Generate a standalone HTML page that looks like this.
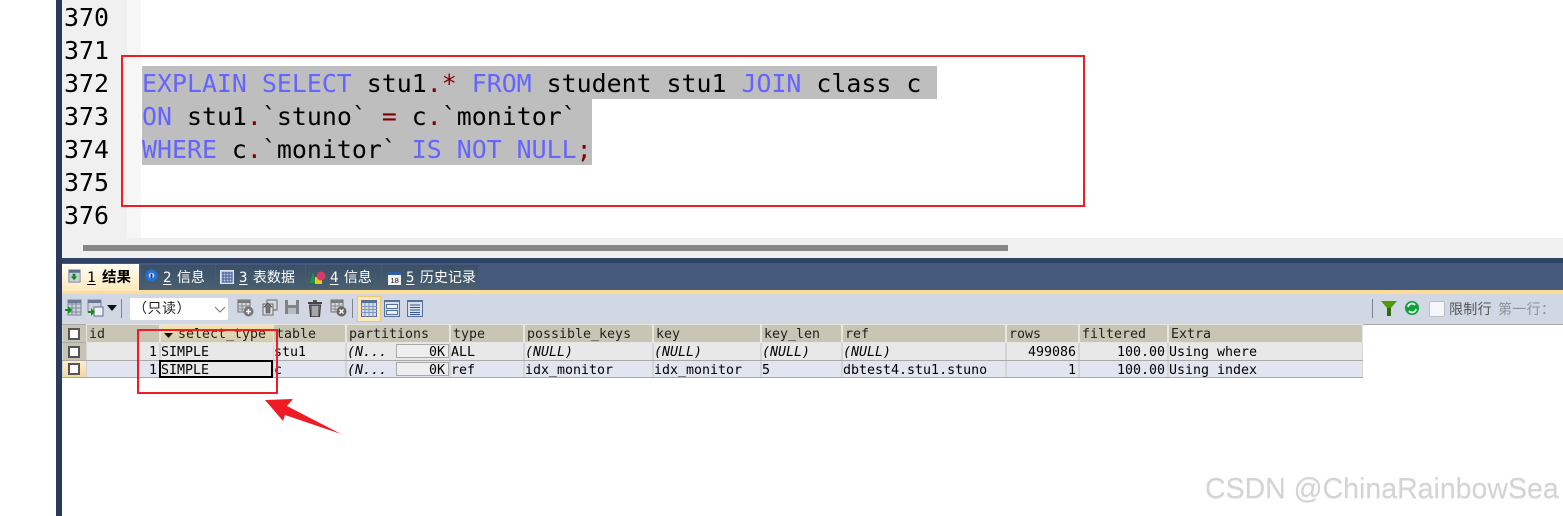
<!DOCTYPE html>
<html><head><meta charset="utf-8">
<style>
html,body{margin:0;padding:0;background:#fff}
#p{position:relative;width:1563px;height:516px;overflow:hidden;background:#fff}
#p div,#p svg{position:absolute}
.m{font-family:"DejaVu Sans Mono","Liberation Mono",monospace;white-space:pre}
.ln{left:64px;font-size:24.9px;line-height:33px;height:33px;color:#000}
.cd{left:142px;font-size:24.9px;line-height:33px;height:33px;color:#000}
.k{color:#6464ff}.o{color:#800000}
.sel{background:#bebebe;left:142px;height:33px}
.c{font-size:13.3px;line-height:18px;height:18px;color:#000;overflow:hidden;box-sizing:border-box}
.h{top:325px;height:17px;background:#c8c5b4;line-height:20px;padding-left:2px;outline:1px solid #e6e6e0;color:#222}
.r1{top:343px;height:17px;background:#e8e8e8;line-height:20px;padding-left:0}
.r2{top:361px;height:16px;background:#e1e5ef;line-height:20px;padding-left:0}
.rt{text-align:right;padding:0 2px 0 0}
.tab{top:265px;height:25px;background:linear-gradient(#3b5068,#4a6070)}
.tt{font-family:"DejaVu Sans Mono","Noto Sans CJK SC",sans-serif;font-size:14px;line-height:26px;height:26px;color:#fff;white-space:pre;word-spacing:-3px}
.tt u{text-underline-offset:2px}
.ct{font-family:"Liberation Sans","Noto Sans CJK SC",sans-serif;font-size:14px;line-height:26px;height:26px;white-space:pre}
.cb{width:8px;height:8px;background:#fff;border:2px solid #555;box-sizing:content-box}
</style></head><body><div id="p">

<div style="left:56px;top:0;width:6px;height:516px;background:#2b3a5a"></div>
<div style="left:62px;top:0;width:65px;height:238px;background:#f0f0f0"></div>
<div style="left:127px;top:0;width:14px;height:238px;background:#f6f6f6"></div>

<div class="m ln" style="top:1px">370</div>
<div class="m ln" style="top:34px">371</div>
<div class="m ln" style="top:67px">372</div>
<div class="m ln" style="top:100px">373</div>
<div class="m ln" style="top:133px">374</div>
<div class="m ln" style="top:166px">375</div>
<div class="m ln" style="top:199px">376</div>

<div class="sel" style="top:66px;width:795px"></div>
<div class="sel" style="top:99px;width:450px"></div>
<div class="sel" style="top:132px;width:450px"></div>

<div class="m cd" style="top:67px"><span class="k">EXPLAIN SELECT</span> stu1<span class="o">.*</span> <span class="k">FROM</span> student stu1 <span class="k">JOIN</span> class c</div>
<div class="m cd" style="top:100px"><span class="k">ON</span> stu1<span class="o">.</span>`stuno` <span class="o">=</span> c<span class="o">.</span>`monitor`</div>
<div class="m cd" style="top:133px"><span class="k">WHERE</span> c<span class="o">.</span>`monitor` <span class="k">IS NOT NULL</span><span class="o">;</span></div>

<div style="left:62px;top:238px;width:1501px;height:20px;background:#f0f0f0"></div>
<div style="left:83px;top:245px;width:925px;height:6px;background:#868686"></div>

<div style="left:62px;top:258px;width:1501px;height:5px;background:#2f4367"></div>
<div style="left:62px;top:263px;width:1501px;height:27px;background:#44597b"></div>
<div style="left:62px;top:290px;width:1501px;height:4px;background:#fddd96"></div>
<div style="left:62px;top:294px;width:1501px;height:30px;background:#d1d8e3"></div>

<div style="left:62px;top:264px;width:77px;height:27px;background:linear-gradient(#fffdf4,#fde9bb)"></div>
<div class="tab" style="left:141px;width:74px"></div>
<div class="tab" style="left:216px;width:89px"></div>
<div class="tab" style="left:306px;width:75px"></div>
<div class="tab" style="left:382px;width:96px"></div>

<svg style="left:67px;top:269px" width="15" height="15" viewBox="0 0 16 16"><rect x="2" y="1" width="12" height="13" fill="#c6cfdd" stroke="#7a8699"/><rect x="2" y="1" width="12" height="3" fill="#5a6f8f"/><path d="M6 5h3v3h2l-3.500 4L4 8h2z" fill="#1a8a1a"/></svg>
<div class="tt" style="left:87px;top:265px;color:#000;font-weight:bold;font-size:14.500px;word-spacing:-2.500px"><u style="font-weight:normal">1</u> 结果</div>

<svg style="left:145px;top:269px" width="13" height="13" viewBox="0 0 14 14"><circle cx="7" cy="7" r="6.500" fill="#2a6fd0"/><circle cx="7" cy="7" r="3" fill="#cfe0f5"/><rect x="6" y="5" width="2" height="5" fill="#123a80"/></svg>
<div class="tt" style="left:163px;top:265px"><u>2</u> 信息</div>

<svg style="left:220px;top:270px" width="14" height="14" viewBox="0 0 14 14"><rect x=".5" y=".5" width="13" height="13" fill="#bcc8e0" stroke="#dfe6f2"/><path d="M2 3h10M2 6h10M2 9h10M2 12h10M3 2v10M6 2v10M9 2v10M12 2v10" stroke="#3f5a90" stroke-width="1"/></svg>
<div class="tt" style="left:239px;top:265px"><u>3</u> 表数据</div>

<svg style="left:310px;top:271px" width="16" height="13" viewBox="0 0 16 13"><path d="M3 1l3 11H0z" fill="#1a9a3a"/><rect x="5" y="6" width="7" height="7" fill="#f5c518"/><circle cx="11" cy="5" r="4.500" fill="#d8386a"/></svg>
<div class="tt" style="left:330px;top:265px"><u>4</u> 信息</div>

<svg style="left:388px;top:271px" width="13" height="14" viewBox="0 0 13 14"><rect x="0" y="2" width="13" height="12" fill="#f2f2f2"/><rect x="0" y="1" width="13" height="3" fill="#2b5fa8"/><text x="2.500" y="12" font-family="Liberation Sans,sans-serif" font-size="7.500" fill="#111">18</text></svg>
<div class="tt" style="left:406px;top:265px"><u>5</u> 历史记录</div>

<svg style="left:65px;top:299px" width="17" height="18" viewBox="0 0 17 18"><rect x="3" y="1" width="13" height="15" fill="#cdd3de" stroke="#7d8798"/><path d="M3 5h13M3 9h13M3 13h13M7 1v15M11 1v15" stroke="#7d8798"/><rect x="3" y="1" width="13" height="3" fill="#6a7a94"/><path d="M0 10h3V7l4 4-4 4v-3H0z" fill="#1a8a1a"/></svg>
<svg style="left:87px;top:299px" width="17" height="18" viewBox="0 0 17 18"><rect x="1" y="1" width="13" height="12" fill="#cdd3de" stroke="#7d8798"/><rect x="1" y="1" width="13" height="3" fill="#6a7a94"/><rect x="7" y="8" width="9" height="9" fill="#eef1f6" stroke="#5a6f8f"/><path d="M1 12h3V9l4 4-4 4v-3H1z" fill="#1a8a1a"/></svg>
<svg style="left:107px;top:305px" width="10" height="6" viewBox="0 0 10 6"><path d="M0 0h10L5 6z" fill="#111"/></svg>
<div style="left:121px;top:299px;width:1px;height:19px;background:#7c8490"></div>

<div style="left:130px;top:298px;width:98px;height:22px;background:#fff;border-radius:2px"></div>
<div class="ct" style="left:133px;top:295px;color:#222;letter-spacing:.5px">（只读）</div>
<svg style="left:214px;top:306px" width="12" height="7" viewBox="0 0 12 7"><path d="M1 1l5 5 5-5" fill="none" stroke="#777"/></svg>

<svg style="left:237px;top:299px" width="17" height="18" viewBox="0 0 17 18"><rect x="1" y="1" width="12" height="12" fill="#d5d8de" stroke="#6e6e6e"/><rect x="1" y="1" width="12" height="3" fill="#777"/><path d="M1 7h12M1 10h12M5 1v12M9 1v12" stroke="#888"/><circle cx="11.500" cy="12.500" r="5" fill="#777"/><path d="M9 12.500h5M11.500 10v5" stroke="#fff" stroke-width="1.500"/></svg>
<svg style="left:261px;top:299px" width="17" height="17" viewBox="0 0 17 17"><rect x="6" y="1" width="10" height="10" fill="#d5d8de" stroke="#666"/><rect x="2" y="5" width="10" height="11" fill="#dfe2e8" stroke="#666"/><path d="M7 4L3 8h2v6h4V8h2z" fill="#777" stroke="#444" stroke-width=".6"/></svg>
<svg style="left:284px;top:299px" width="16" height="16" viewBox="0 0 16 16"><path d="M1 1h14v14H1z" fill="#808387"/><rect x="4" y="1" width="8" height="5" fill="#d8dade"/><rect x="4" y="9" width="8" height="6" fill="#b9bcc1"/></svg>
<svg style="left:307px;top:300px" width="16" height="17" viewBox="0 0 16 17"><rect x="1" y="2" width="14" height="2" fill="#444"/><rect x="6" y="0" width="4" height="2" fill="#555"/><path d="M2.500 5h11l-1 12h-9z" fill="#6f6f6f" stroke="#333"/><path d="M6 6v10M8 6v10M10 6v10" stroke="#ddd"/></svg>
<svg style="left:330px;top:299px" width="17" height="18" viewBox="0 0 17 18"><rect x="1" y="1" width="12" height="12" fill="#d5d8de" stroke="#6e6e6e"/><rect x="1" y="1" width="12" height="3" fill="#777"/><path d="M1 7h12M1 10h12M5 1v12M9 1v12" stroke="#888"/><circle cx="11.500" cy="12.500" r="5" fill="#666"/><path d="M9.500 10.500l4 4M13.500 10.500l-4 4" stroke="#fff" stroke-width="1.500"/></svg>
<div style="left:352px;top:299px;width:1px;height:19px;background:#7c8490"></div>

<div style="left:358px;top:297px;width:22px;height:24px;background:#fde9b8;outline:1px solid #e8c878"></div>
<svg style="left:361px;top:300px" width="16" height="17" viewBox="0 0 16 17"><rect x=".5" y=".5" width="15" height="16" fill="#d7deeb" stroke="#56709c"/><rect x="0" y="0" width="16" height="3" fill="#56709c"/><path d="M0 6.500h16M0 9.500h16M0 12.500h16M4 3v14M8 3v14M12 3v14" stroke="#7f95bb"/></svg>
<svg style="left:384px;top:300px" width="16" height="17" viewBox="0 0 16 17"><rect x=".5" y=".5" width="15" height="16" fill="#d7deeb" stroke="#56709c"/><rect x="0" y="0" width="16" height="2" fill="#56709c"/><rect x="2.500" y="4.500" width="11" height="4" fill="#eef1f7" stroke="#56709c"/><rect x="2.500" y="10.500" width="11" height="4" fill="#eef1f7" stroke="#56709c"/></svg>
<svg style="left:407px;top:300px" width="16" height="17" viewBox="0 0 16 17"><rect x=".5" y=".5" width="15" height="16" fill="#d7deeb" stroke="#56709c"/><rect x="0" y="0" width="16" height="2" fill="#56709c"/><path d="M3 5h10M3 7.500h10M3 10h10M3 12.500h10M3 14.500h10" stroke="#3f5a90"/></svg>

<div style="left:1372px;top:299px;width:1px;height:19px;background:#7c8490"></div>
<svg style="left:1381px;top:301px" width="16" height="15" viewBox="0 0 16 15"><path d="M0 0h16L10 7v8H6V7z" fill="#4c9a06"/><path d="M6 7h4v8H6z" fill="#2f6b02"/></svg>
<svg style="left:1405px;top:301px" width="14" height="14" viewBox="0 0 14 14"><circle cx="7" cy="7" r="7" fill="#12a03a"/><path d="M3 6a4 4 0 0 1 7-2M11 8a4 4 0 0 1-7 2" fill="none" stroke="#e8fff0" stroke-width="1.800"/></svg>
<div style="left:1429px;top:301px;width:14px;height:14px;background:#f4f6f9;border:1px solid #b9bec6;border-radius:2px"></div>
<div class="ct" style="left:1449px;top:296px;color:#555;letter-spacing:.3px">限制行</div>
<div class="ct" style="left:1498px;top:296px;color:#8d929b;letter-spacing:.3px">第一行：</div>

<div style="left:62px;top:324px;width:1301px;height:54px;background:#d4d4d4"></div>
<div style="left:62px;top:342px;width:1301px;height:1px;background:#a9a9a9"></div>
<div style="left:62px;top:360px;width:1301px;height:1px;background:#a9a9a9"></div>
<div style="left:62px;top:377px;width:1301px;height:1px;background:#a9a9a9"></div>
<div style="left:62px;top:324px;width:1501px;height:1px;background:#a9a9a9"></div>

<div style="left:63px;top:325px;width:23px;height:17px;background:#c8c5b4"></div>
<div style="left:63px;top:343px;width:23px;height:17px;background:#c8c5b4"></div>
<div style="left:63px;top:361px;width:23px;height:16px;background:linear-gradient(#fdeecb,#f3d9a0)"></div>
<div class="cb" style="left:68px;top:328px"></div>
<div class="cb" style="left:68px;top:346px"></div>
<div class="cb" style="left:68px;top:363px"></div>

<div class="m c h" style="left:87px;width:72px">id</div>
<div class="m c h" style="left:161px;width:112px;background:linear-gradient(#fbe3ab,#cfcab2);padding-left:17px">select_type</div>
<svg style="left:164px;top:333px" width="9" height="5" viewBox="0 0 9 5"><path d="M0 0h9L4.500 5z" fill="#111"/></svg>
<div class="m c h" style="left:274px;width:71px">table</div>
<div class="m c h" style="left:347px;width:102px">partitions</div>
<div class="m c h" style="left:451px;width:72px">type</div>
<div class="m c h" style="left:525px;width:127px">possible_keys</div>
<div class="m c h" style="left:654px;width:106px">key</div>
<div class="m c h" style="left:762px;width:79px">key_len</div>
<div class="m c h" style="left:843px;width:162px">ref</div>
<div class="m c h" style="left:1007px;width:71px">rows</div>
<div class="m c h" style="left:1080px;width:87px">filtered</div>
<div class="m c h" style="left:1169px;width:193px">Extra</div>

<div class="m c r1 rt" style="left:87px;width:72px">1</div>
<div class="m c r1" style="left:161px;width:112px">SIMPLE</div>
<div class="m c r1" style="left:274px;width:71px">stu1</div>
<div class="m c r1" style="left:347px;width:102px"><i>(N...</i></div>
<div class="m c r1 rt" style="left:396px;top:344px;height:14px;line-height:15px;width:53px;background:#eeeeee;border:1px solid #a9a9a9;padding-right:3px">0K</div>
<div class="m c r1" style="left:451px;width:72px">ALL</div>
<div class="m c r1" style="left:525px;width:127px"><i>(NULL)</i></div>
<div class="m c r1" style="left:654px;width:106px"><i>(NULL)</i></div>
<div class="m c r1" style="left:762px;width:79px"><i>(NULL)</i></div>
<div class="m c r1" style="left:843px;width:162px"><i>(NULL)</i></div>
<div class="m c r1 rt" style="left:1007px;width:71px">499086</div>
<div class="m c r1 rt" style="left:1080px;width:87px">100.00</div>
<div class="m c r1" style="left:1169px;width:193px">Using where</div>

<div class="m c r2 rt" style="left:87px;width:72px">1</div>
<div class="m c r2" style="left:161px;width:112px;background:#e8e8e8">SIMPLE</div>
<div class="m c r2" style="left:274px;width:71px">c</div>
<div class="m c r2" style="left:347px;width:102px"><i>(N...</i></div>
<div class="m c r2 rt" style="left:396px;top:362px;height:14px;line-height:15px;width:53px;background:#eeeeee;border:1px solid #a9a9a9;padding-right:3px">0K</div>
<div class="m c r2" style="left:451px;width:72px">ref</div>
<div class="m c r2" style="left:525px;width:127px">idx_monitor</div>
<div class="m c r2" style="left:654px;width:106px">idx_monitor</div>
<div class="m c r2" style="left:762px;width:79px">5</div>
<div class="m c r2" style="left:843px;width:162px">dbtest4.stu1.stuno</div>
<div class="m c r2 rt" style="left:1007px;width:71px">1</div>
<div class="m c r2 rt" style="left:1080px;width:87px">100.00</div>
<div class="m c r2" style="left:1169px;width:193px">Using index</div>

<div style="left:159px;top:360px;width:110px;height:14px;border:2px solid #000;box-sizing:content-box"></div>

<div style="left:121px;top:55px;width:960px;height:148px;border:2px solid #ee1c25"></div>
<div style="left:137px;top:329px;width:137px;height:61px;border:2px solid #ee1c25"></div>
<svg style="left:260px;top:395px" width="90" height="45" viewBox="260 395 90 45"><path d="M265 400L293 399L287 406L341 434L285 415L283 421Z" fill="#ee1c25"/></svg>

<div style="left:1205px;top:472px;font-family:'Liberation Sans',sans-serif;font-size:28.500px;line-height:34px;color:#d4d4d4;white-space:nowrap;text-shadow:0 1px 0 #eeeeee">CSDN @ChinaRainbowSea</div>

</div></body></html>
